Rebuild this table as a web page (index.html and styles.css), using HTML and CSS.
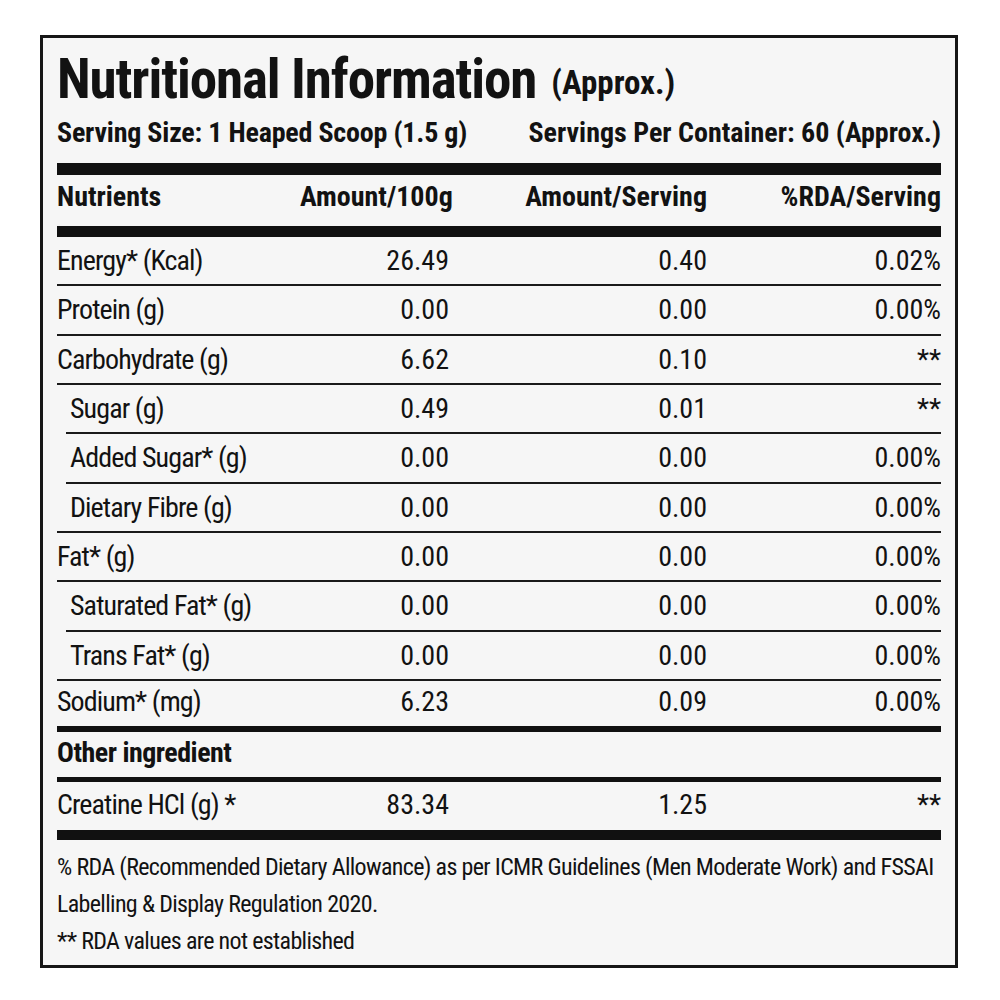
FILE: index.html
```html
<!DOCTYPE html>
<html lang="en">
<head>
<meta charset="utf-8">
<title>Nutritional Information</title>
<link rel="stylesheet" href="styles.css">
</head>
<body>
<div class="label">
  <div class="title-row">
    <h1 class="title">Nutritional Information</h1>
    <span class="approx">(Approx.)</span>
  </div>
  <div class="serving-row">
    <span>Serving Size: 1 Heaped Scoop (1.5 g)</span>
    <span>Servings Per Container: 60 (Approx.)</span>
  </div>
  <div class="bar bar-top"></div>
  <div class="row head">
    <span>Nutrients</span>
    <span class="num">Amount/100g</span>
    <span class="num">Amount/Serving</span>
    <span class="num">%RDA/Serving</span>
  </div>
  <div class="bar bar-head"></div>
  <div class="row">
    <span class="name">Energy* (Kcal)</span><span class="num">26.49</span><span class="num">0.40</span><span class="num">0.02%</span>
  </div>
  <div class="row">
    <span class="name">Protein (g)</span><span class="num">0.00</span><span class="num">0.00</span><span class="num">0.00%</span>
  </div>
  <div class="row">
    <span class="name">Carbohydrate (g)</span><span class="num">6.62</span><span class="num">0.10</span><span class="num star">**</span>
  </div>
  <div class="row sub inset">
    <span class="name">Sugar (g)</span><span class="num">0.49</span><span class="num">0.01</span><span class="num star">**</span>
  </div>
  <div class="row sub inset">
    <span class="name">Added Sugar* (g)</span><span class="num">0.00</span><span class="num">0.00</span><span class="num">0.00%</span>
  </div>
  <div class="row sub">
    <span class="name">Dietary Fibre (g)</span><span class="num">0.00</span><span class="num">0.00</span><span class="num">0.00%</span>
  </div>
  <div class="row">
    <span class="name">Fat* (g)</span><span class="num">0.00</span><span class="num">0.00</span><span class="num">0.00%</span>
  </div>
  <div class="row sub inset">
    <span class="name">Saturated Fat* (g)</span><span class="num">0.00</span><span class="num">0.00</span><span class="num">0.00%</span>
  </div>
  <div class="row sub">
    <span class="name">Trans Fat* (g)</span><span class="num">0.00</span><span class="num">0.00</span><span class="num">0.00%</span>
  </div>
  <div class="row sodium">
    <span class="name">Sodium* (mg)</span><span class="num">6.23</span><span class="num">0.09</span><span class="num">0.00%</span>
  </div>
  <div class="row other">
    <span class="name">Other ingredient</span>
  </div>
  <div class="row creatine">
    <span class="name">Creatine HCl (g) *</span><span class="num">83.34</span><span class="num">1.25</span><span class="num star">**</span>
  </div>
  <div class="notes">
    <p>% RDA (Recommended Dietary Allowance) as per ICMR Guidelines (Men Moderate Work) and FSSAI Labelling &amp; Display Regulation 2020.</p>
    <p>** RDA values are not established</p>
  </div>
</div>
</body>
</html>
```

FILE: styles.css
```css
html, body {
  margin: 0;
  padding: 0;
  background: #ffffff;
}

.label {
  margin: 35px 0 0 40px;
  width: 918px;
  height: 933px;
  box-sizing: border-box;
  border: 3px solid #161616;
  background: #f6f6f6;
  padding: 0 14px;
  font-family: "Liberation Sans Narrow", "Roboto Condensed", "Liberation Sans", sans-serif;
  color: #121212;
}

.title-row {
  display: flex;
  align-items: baseline;
  height: 82px;
  line-height: 82px;
}

.title {
  margin: 0;
  font-size: 55px;
  font-weight: bold;
  letter-spacing: -1.1px;
}

.approx {
  margin-left: 15px;
  font-size: 33px;
  font-weight: bold;
  letter-spacing: 0;
  position: relative;
  top: -4px;
}

.serving-row {
  display: flex;
  justify-content: space-between;
  height: 25px;
  line-height: 25px;
  font-size: 28px;
  font-weight: bold;
}

.serving-row span:first-child {
  letter-spacing: -0.2px;
}

.bar {
  background: #111111;
}

.bar-top {
  margin-top: 18px;
  height: 12px;
}

.bar-head {
  height: 11px;
}

.row {
  display: grid;
  grid-template-columns: 1fr 149px 258px 234px;
  height: 47.35px;
  line-height: 47px;
  font-size: 28px;
  border-bottom: 2px solid #1a1a1a;
  white-space: nowrap;
}

.row .name {
  letter-spacing: -0.9px;
}

.row .num {
  text-align: right;
}

.row.head {
  height: 51px;
  line-height: 44px;
  font-weight: bold;
  border-bottom: none;
}

.row.sub > span:first-child {
  padding-left: 13px;
}

.row.inset {
  margin-left: 9px;
}

.row.inset > span:first-child {
  padding-left: 4px;
}

.row.sodium {
  height: 45px;
  line-height: 41px;
  border-bottom: 6px solid #111111;
}

.row.other {
  height: 45px;
  line-height: 41px;
  font-weight: bold;
  border-bottom: 5px solid #111111;
}

.row.other .name {
  letter-spacing: -0.5px;
}

.row.creatine {
  height: 48px;
  line-height: 46px;
  border-bottom: 10px solid #111111;
}

.notes {
  padding-top: 9px;
  font-size: 24px;
  line-height: 37px;
  letter-spacing: -0.66px;
}

.notes p {
  margin: 0;
}
```
